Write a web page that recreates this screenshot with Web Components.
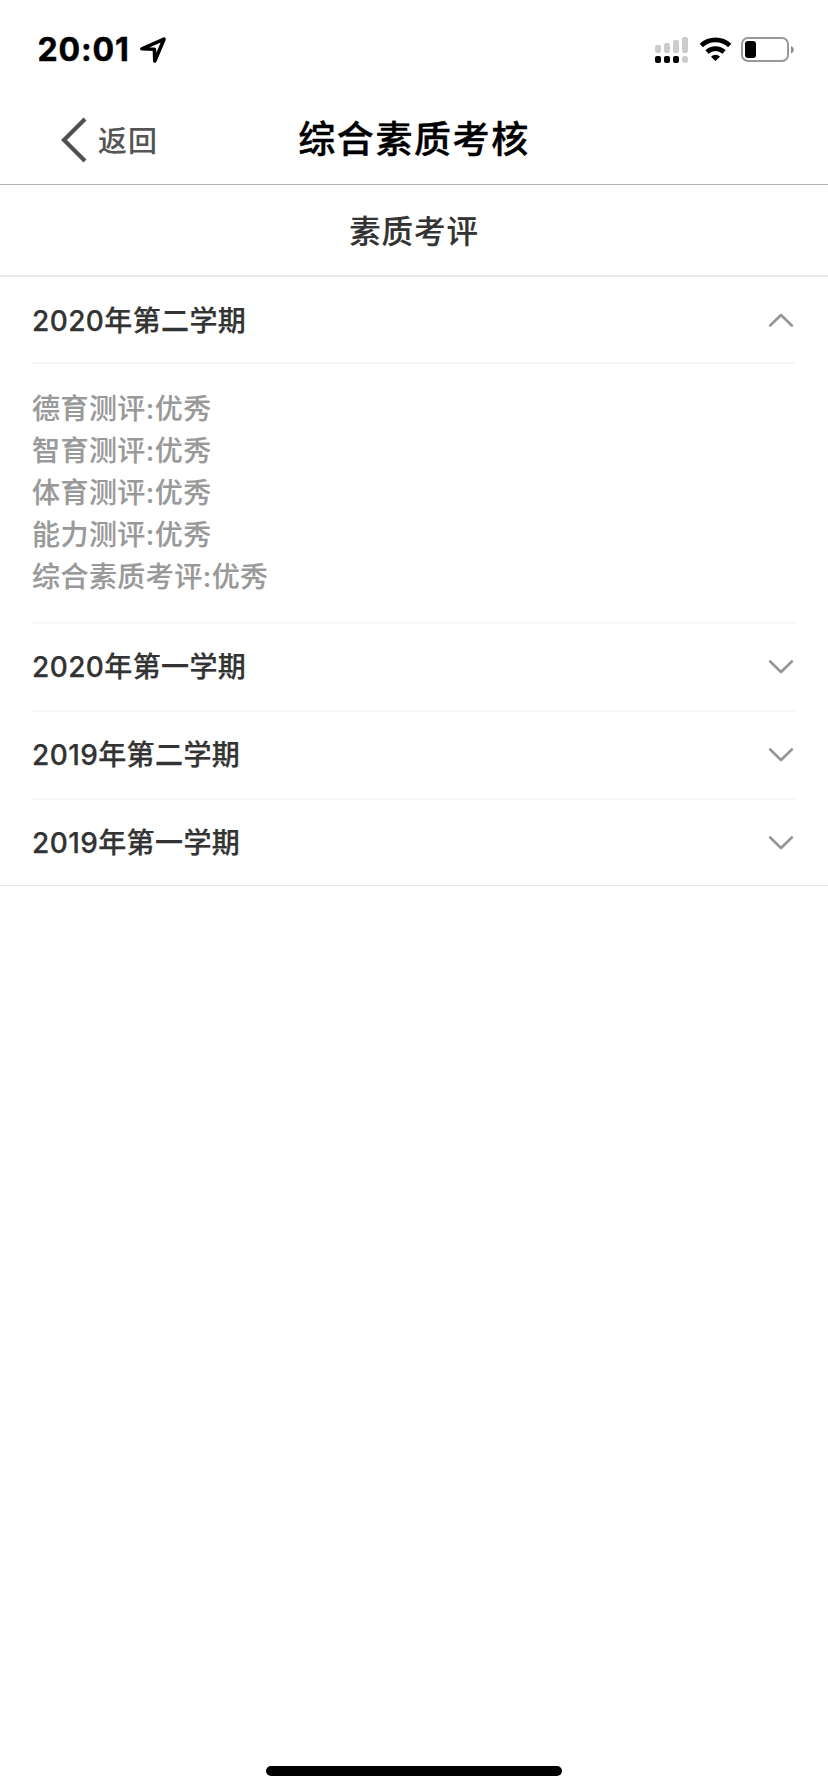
<!DOCTYPE html>
<html lang="zh-CN">
<head>
<meta charset="utf-8">
<title>综合素质考核</title>
<style>
html,body{margin:0;height:100%;background:#fff}
body{font-family:Inter,"Noto Sans CJK SC",sans-serif;overflow:hidden}
</style>
</head>
<body>
<app-screen>
  <status-bar slot="top" time="20:01"></status-bar>
  <nav-header slot="top" back="返回">综合素质考核</nav-header>
  <section-title>素质考评</section-title>
  <term-list>
    <term-item label="2020年第二学期" open>
      <score-line>德育测评:优秀</score-line>
      <score-line>智育测评:优秀</score-line>
      <score-line>体育测评:优秀</score-line>
      <score-line>能力测评:优秀</score-line>
      <score-line>综合素质考评:优秀</score-line>
    </term-item>
    <term-item label="2020年第一学期"></term-item>
    <term-item label="2019年第二学期"></term-item>
    <term-item label="2019年第一学期" last></term-item>
  </term-list>
</app-screen>
<script>
const define = (name, render) => customElements.define(name, class extends HTMLElement {
  constructor() {
    super();
    this.attachShadow({ mode: 'open' }).innerHTML = render(this);
  }
});

define('app-screen', () => `
<style>
:host{display:flex;flex-direction:column;width:828px;height:1792px;background:#fff}
main{flex:1}
footer{display:flex;justify-content:center;height:26px}
i{width:296px;height:10px;border-radius:5px;background:#000}
</style>
<slot name="top"></slot><main><slot></slot></main><footer><i></i></footer>`);

define('status-bar', el => `
<style>
:host{display:flex;box-sizing:border-box;height:96px;padding:0 20px 0 37.5px;align-items:flex-start;justify-content:space-between}
.left,.right{display:flex;align-items:center}
.left{height:60px;padding-top:20px}
b{font-weight:700;font-size:32px;line-height:40px;letter-spacing:.85px;color:#000;-webkit-text-stroke:.5px}
.left svg{margin:0 0 0 9px}
.right{padding-top:36px}
svg{display:block}
</style>
<div class="left"><b>${el.getAttribute('time')}</b>
<svg width="28" height="28" viewBox="0 0 28 28"><path d="M2.900 12.800 25 3.200 15.800 25 15.400 13.200Z" fill="none" stroke="#000" stroke-width="3.600" stroke-linejoin="round"/></svg></div>
<div class="right">
<svg width="154" height="28" viewBox="654 36 154 28">
<g fill="#ccc"><rect x="655" y="45" width="6" height="8" rx="2"/><rect x="664" y="43" width="6" height="10" rx="2"/><rect x="673" y="40" width="6" height="13" rx="2"/><rect x="682" y="37" width="6" height="16" rx="2"/><rect x="682" y="56" width="6" height="7" rx="2.4"/></g>
<g><rect x="655" y="56" width="6" height="7" rx="2"/><rect x="664" y="56" width="6" height="7" rx="2"/><rect x="673" y="56" width="6" height="7" rx="2"/></g>
<g fill="none" stroke="#000" stroke-width="4.800"><path d="M701.3 45.6a20.6 20.6 0 0 1 28.4 0"/><path d="M707 52a12.4 12.4 0 0 1 17 0"/></g>
<path d="M715.5 61 711 56.8a6.200 6.200 0 0 1 9 0Z"/>
<rect x="742" y="38" width="46" height="23" rx="6" fill="none" stroke="#999" stroke-width="2"/>
<rect x="745" y="41" width="11" height="17" rx="3"/>
<path d="M791 46c3.7 1.500 3.700 6 0 7.500Z" fill="#8c8c8c"/>
</svg></div>`);

define('nav-header', el => `
<style>
:host{display:grid;grid-template-columns:1fr auto 1fr;align-items:center;box-sizing:border-box;height:89px;border-bottom:1px solid #b2b2b2}
.back{display:flex;align-items:center;padding-left:60px;color:#555;font-size:29px;font-weight:500;letter-spacing:1px}
svg{display:block;margin-right:10px}
h1{margin:0;font-size:37px;line-height:50px;font-weight:500;letter-spacing:1.6px;color:#000;-webkit-text-stroke:.4px}
.back span{line-height:40px;padding-top:3px}
</style>
<div class="back"><svg width="28" height="48" viewBox="0 0 28 48"><path d="M25 3 4 24 25 45" fill="none" stroke="#505050" stroke-width="4.200"/></svg><span>${el.getAttribute('back')}</span></div>
<h1><slot></slot></h1>`);

define('section-title', () => `
<style>
:host{display:flex;align-items:center;justify-content:center;box-sizing:border-box;height:92px;padding-bottom:2px;border-bottom:2px solid #e9e9e9;font-size:31.500px;font-weight:500;letter-spacing:.9px;color:#333;-webkit-text-stroke:.15px}
</style><slot></slot>`);

define('term-list', () => `
<style>:host{display:block;border-bottom:1px solid #e6e6e6}</style><slot></slot>`);

define('term-item', el => `
<style>
:host{display:block;padding:0 32px}
header{display:flex;align-items:center;justify-content:space-between;box-sizing:border-box;height:88px;border-bottom:2px solid #f7f7f7;padding-right:2px}
:host([open]) header{height:87px}
:host([last]) header{border:0;height:85px}
b{font-size:28px;line-height:40px;font-weight:500;letter-spacing:.4px;color:#333;-webkit-text-stroke:.25px}
:host([open]) b{padding-top:2px}
svg{display:block}
:host([open]) svg{transform:scaleY(-1)}
.body{padding:24px 0 24px;border-bottom:2px solid #f9f9f9}
</style>
<header><b>${el.getAttribute('label')}</b>
<svg width="26" height="16" viewBox="0 0 26 16"><path d="M2.200 2.500 13 13 23.800 2.500" fill="none" stroke="#969696" stroke-width="2.700" stroke-linecap="round" stroke-linejoin="round"/></svg></header>
${el.hasAttribute('open') ? '<div class="body"><slot></slot></div>' : ''}`);

define('score-line', () => `
<style>:host{display:block;font-size:28px;line-height:42px;font-weight:500;letter-spacing:.45px;color:#999;-webkit-text-stroke:.15px}</style><slot></slot>`);
</script>
</body>
</html>
